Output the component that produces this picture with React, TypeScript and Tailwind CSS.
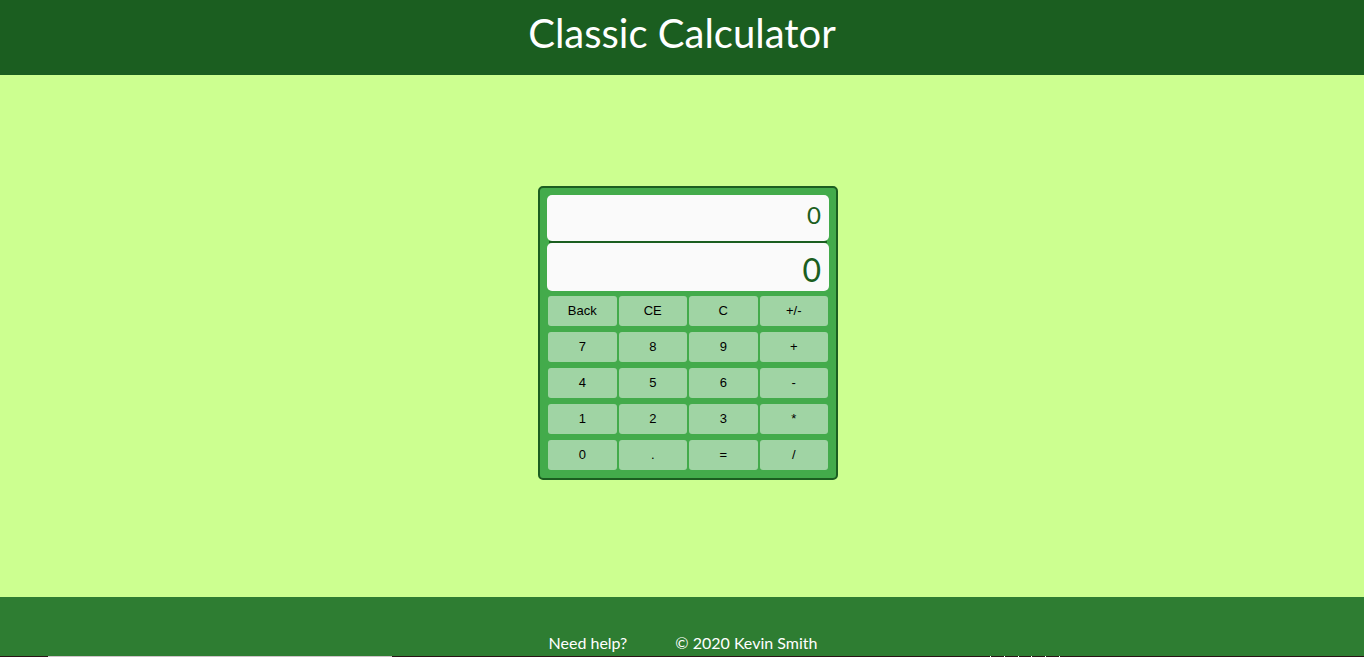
import { useState } from "react";

const keys = [
  "Back", "CE", "C", "+/-",
  "7", "8", "9", "+",
  "4", "5", "6", "-",
  "1", "2", "3", "*",
  "0", ".", "=", "/",
];

function compute(a: number, op: string, b: number) {
  if (op === "+") return a + b;
  if (op === "-") return a - b;
  if (op === "*") return a * b;
  return a / b;
}

export default function App() {
  const [entry, setEntry] = useState("0");
  const [total, setTotal] = useState("0");
  const [pending, setPending] = useState("");

  function press(key: string) {
    if (key === "Back") setEntry(entry.length > 1 ? entry.slice(0, -1) : "0");
    else if (key === "CE") setEntry("0");
    else if (key === "C") {
      setEntry("0");
      setTotal("0");
      setPending("");
    } else if (key === "+/-") setEntry(String(-Number(entry)));
    else if (key === ".") setEntry(entry.includes(".") ? entry : entry + ".");
    else if (/\d/.test(key)) setEntry(entry === "0" ? key : entry + key);
    else {
      const value = pending ? compute(Number(total), pending, Number(entry)) : Number(entry);
      setTotal(String(value));
      setEntry("0");
      setPending(key === "=" ? "" : key);
    }
  }

  return (
    <div className="flex min-h-screen flex-col bg-[#ccff90] font-['Lato',sans-serif]">
      <header className="bg-[#1b5e20] pt-[3px] pb-3 text-center text-white">
        <h1 className="text-[40px] leading-[60px]">Classic Calculator</h1>
      </header>

      <main className="flex grow items-center justify-center pt-[2px] pb-[8px] pl-3">
        <section
          aria-label="Calculator"
          className="w-[300px] rounded-[5px] border-2 border-[#1b5e20] bg-[#43ab4b] px-[7px] pt-[7px] pb-2"
        >
          <div className="text-right text-[#1b5e20]">
            <output
              aria-label="Total"
              className="block h-[46px] overflow-hidden rounded-[5px] bg-[#fafafa] px-2 text-2xl leading-10"
            >
              {total}
            </output>
            <div className="mx-[2px] h-[2px] bg-[#1b5e20]" />
            <output
              aria-label="Entry"
              className="block h-12 overflow-hidden rounded-[5px] bg-[#fafafa] px-2 text-[32px] leading-[54px]"
            >
              {entry}
            </output>
          </div>
          <div className="mt-[5px] grid grid-cols-4 gap-x-[2px] gap-y-[6px] px-px">
            {keys.map((key) => (
              <button
                key={key}
                type="button"
                onClick={() => press(key)}
                className="h-[30px] rounded-[3px] bg-[#a0d4a4] font-['Liberation_Sans',Arial,sans-serif] text-[13px] leading-[30px] text-black hover:bg-[#b4dfb7]"
              >
                {key}
              </button>
            ))}
          </div>
        </section>
      </main>

      <footer className="bg-[#2e7d32] text-white">
        <div className="flex h-[59px] items-end justify-center gap-12 pb-px pl-[2px] text-base leading-6">
          <a href="#help">Need help?</a>
          <p>© 2020 Kevin Smith</p>
        </div>
        <div className="flex h-px bg-[#2a1416]">
          <div className="ml-12 w-[344px] bg-[#cfc3c9]" />
          <div className="ml-[598px] flex w-[70px] justify-between">
            <span className="w-px bg-white" />
            <span className="w-px bg-white" />
            <span className="w-px bg-white" />
            <span className="w-px bg-white" />
            <span className="w-px bg-white" />
            <span className="w-px bg-white" />
          </div>
        </div>
      </footer>
    </div>
  );
}
